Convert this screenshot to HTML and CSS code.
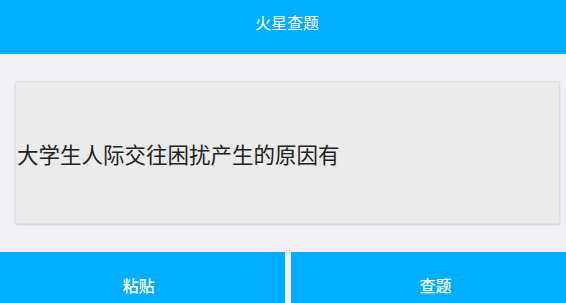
FILE: index.html
```html
<!DOCTYPE html>
<html lang="zh">
<head>
<meta charset="utf-8">
<title>火星查题</title>
<link rel="stylesheet" href="styles.css">
</head>
<body>
<div class="app">
  <header class="topbar">火星查题</header>
  <main class="content">
    <div class="card">大学生人际交往困扰产生的原因有</div>
  </main>
  <footer class="actions">
    <button class="btn btn-paste">粘贴</button>
    <button class="btn btn-search">查题</button>
  </footer>
</div>
</body>
</html>
```
FILE: styles.css
```css
html, body {
  margin: 0;
  padding: 0;
  height: 100%;
  overflow: hidden;
}
body {
  background: #efeff4;
  font-family: "Noto Sans CJK SC", "Noto Sans", sans-serif;
}
.app {
  display: flex;
  flex-direction: column;
  width: 566px;
}
.topbar {
  height: 54px;
  background: #00adfe;
  color: #ffffff;
  font-size: 16px;
  display: flex;
  align-items: center;
  justify-content: center;
  padding-left: 8px;
  padding-bottom: 10px;
  box-sizing: border-box;
}
.content {
  padding: 27px 6px 0 15px;
  height: 198px;
  box-sizing: border-box;
}
.card {
  height: 143px;
  background: #ebebeb;
  border: 1px solid #e0e0e0;
  border-radius: 2px;
  box-shadow: 0 1px 2px rgba(0,0,0,0.12);
  display: flex;
  align-items: center;
  padding-left: 1px;
  padding-top: 2px;
  box-sizing: border-box;
  font-size: 21.5px;
  color: #222222;
}
.actions {
  display: flex;
  gap: 6px;
  height: 66px;
}
.btn {
  border: none;
  margin: 0;
  background: #00adfe;
  color: #ffffff;
  font-family: "Noto Sans CJK SC", sans-serif;
  font-size: 16px;
  font-weight: 500;
  display: flex;
  align-items: center;
  justify-content: center;
  padding: 0;
}
.btn-paste {
  width: 285px;
  padding-right: 8px;
}
.btn-search {
  flex: 1;
  padding-left: 14px;
}
```
